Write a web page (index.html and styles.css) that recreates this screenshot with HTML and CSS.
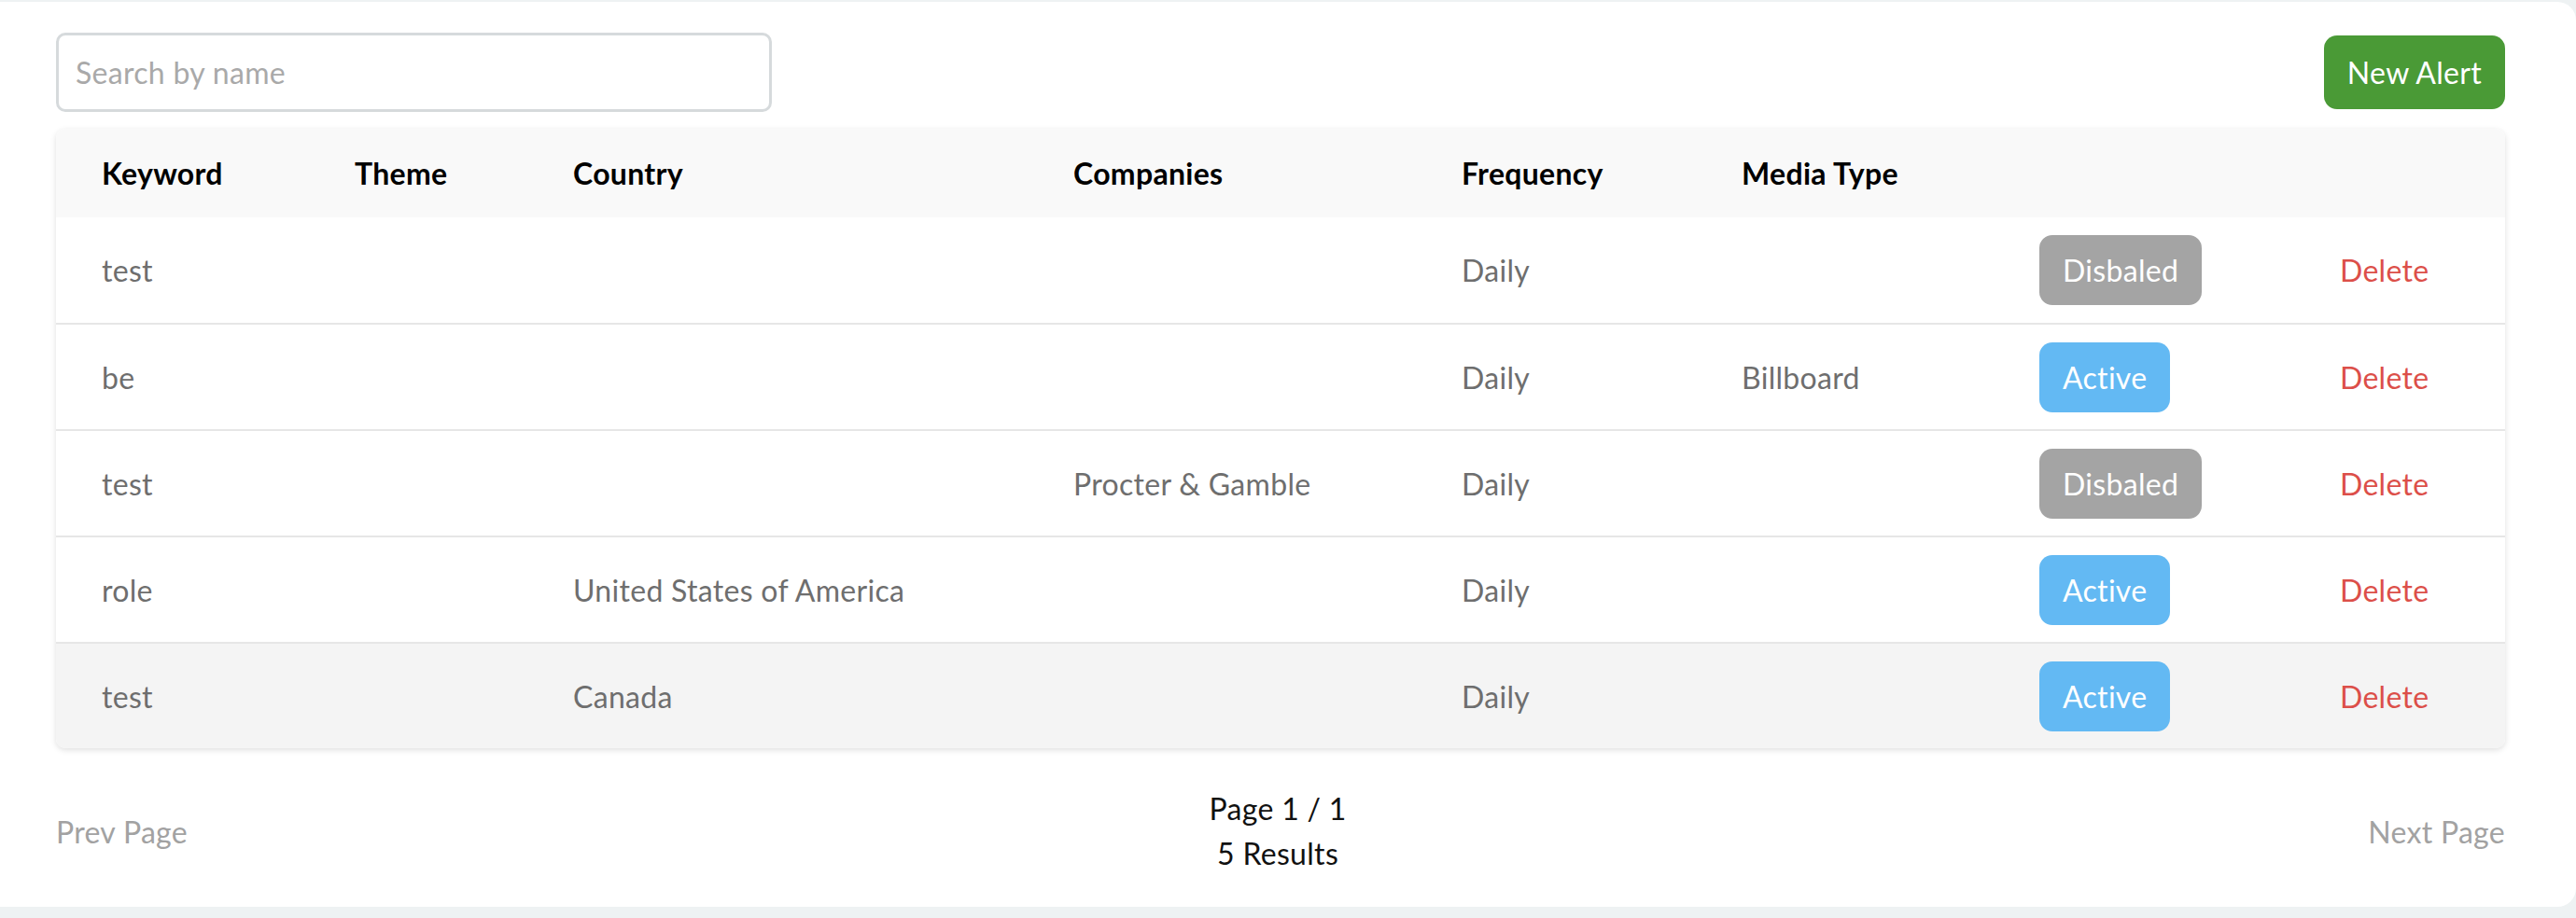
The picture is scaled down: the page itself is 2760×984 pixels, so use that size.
FILE: index.html
```html
<!DOCTYPE html>
<html lang="en">
<head>
<meta charset="utf-8">
<title>Alerts</title>
<link rel="stylesheet" href="styles.css">
</head>
<body>
<div class="panel">
  <div class="toolbar">
    <input class="search" type="text" placeholder="Search by name">
    <button class="btn-new">New Alert</button>
  </div>
  <div class="table-card">
    <table class="alerts">
      <colgroup>
        <col class="c-keyword"><col class="c-theme"><col class="c-country"><col class="c-companies"><col class="c-frequency"><col class="c-media"><col class="c-status"><col class="c-action">
      </colgroup>
      <thead>
        <tr>
          <th>Keyword</th><th>Theme</th><th>Country</th><th>Companies</th><th>Frequency</th><th>Media Type</th><th></th><th></th>
        </tr>
      </thead>
      <tbody>
        <tr>
          <td>test</td><td></td><td></td><td></td><td>Daily</td><td></td>
          <td><span class="badge badge-off">Disbaled</span></td><td><span class="del">Delete</span></td>
        </tr>
        <tr>
          <td>be</td><td></td><td></td><td></td><td>Daily</td><td>Billboard</td>
          <td><span class="badge badge-on">Active</span></td><td><span class="del">Delete</span></td>
        </tr>
        <tr>
          <td>test</td><td></td><td></td><td>Procter &amp; Gamble</td><td>Daily</td><td></td>
          <td><span class="badge badge-off">Disbaled</span></td><td><span class="del">Delete</span></td>
        </tr>
        <tr>
          <td>role</td><td></td><td>United States of America</td><td></td><td>Daily</td><td></td>
          <td><span class="badge badge-on">Active</span></td><td><span class="del">Delete</span></td>
        </tr>
        <tr class="hover">
          <td>test</td><td></td><td>Canada</td><td></td><td>Daily</td><td></td>
          <td><span class="badge badge-on">Active</span></td><td><span class="del">Delete</span></td>
        </tr>
      </tbody>
    </table>
  </div>
  <div class="pager">
    <span class="pager-link">Prev Page</span>
    <div class="pager-info">
      <div>Page 1 / 1</div>
      <div>5 Results</div>
    </div>
    <span class="pager-link">Next Page</span>
  </div>
</div>
</body>
</html>
```

FILE: styles.css
```css
* { box-sizing: border-box; }
html, body { margin: 0; padding: 0; }
body {
  background: #eef2f3;
  font-family: Lato, "Open Sans", sans-serif;
  font-size: 32px;
  letter-spacing: 0.3px;
  color: #111;
}
.panel {
  margin-top: 2px;
  height: 970px;
  background: #fff;
  border-radius: 0 20px 20px 0;
  padding: 33px 76px 33px 60px;
}
.toolbar {
  display: flex;
  justify-content: space-between;
  align-items: center;
}
.search {
  width: 767px;
  height: 85px;
  border: 3px solid #d6dadc;
  border-radius: 10px;
  padding: 0 18px;
  font-family: inherit;
  font-size: 32px;
  letter-spacing: 0.3px;
  color: #333;
  outline: none;
}
.search::placeholder { color: #a9a9a9; }
.btn-new {
  height: 79px;
  padding: 0 25px;
  border: none;
  border-radius: 14px;
  background: #4a9a36;
  color: #fff;
  font-family: inherit;
  font-size: 32px;
  letter-spacing: 0.3px;
}
.table-card {
  margin-top: 18px;
  border-radius: 10px;
  overflow: hidden;
  box-shadow: 0 2px 6px rgba(0,0,0,0.13);
}
.alerts {
  width: 100%;
  border-collapse: collapse;
  table-layout: fixed;
}
.c-keyword { width: 271px; }
.c-theme { width: 234px; }
.c-country { width: 536px; }
.c-companies { width: 416px; }
.c-frequency { width: 300px; }
.c-media { width: 319px; }
.c-status { width: 322px; }
.c-action { width: 226px; }
.alerts th {
  height: 95px;
  padding: 0 0 0 49px;
  background: #f9f9f9;
  text-align: left;
  font-weight: 700;
  color: #000;
  vertical-align: middle;
}
.alerts td {
  height: 114px;
  padding: 0 0 0 49px;
  color: #6e6e6e;
  vertical-align: middle;
  border-bottom: 2px solid #e6e6e6;
  white-space: nowrap;
}
.alerts tbody tr:last-child td { border-bottom: none; height: 113px; }
.alerts tr.hover td { background: #f4f4f4; }
.badge {
  display: inline-block;
  height: 75px;
  line-height: 75px;
  padding: 0 25px;
  border-radius: 14px;
  color: #fff;
}
.badge-off { background: #a4a4a4; }
.badge-on { background: #63b9f3; }
.del { color: #dc4f49; }
.pager {
  display: flex;
  justify-content: space-between;
  align-items: center;
  margin-top: 41px;
}
.pager-link { color: #a2a2a2; }
.pager-info {
  text-align: center;
  line-height: 48px;
  color: #111;
}
```
